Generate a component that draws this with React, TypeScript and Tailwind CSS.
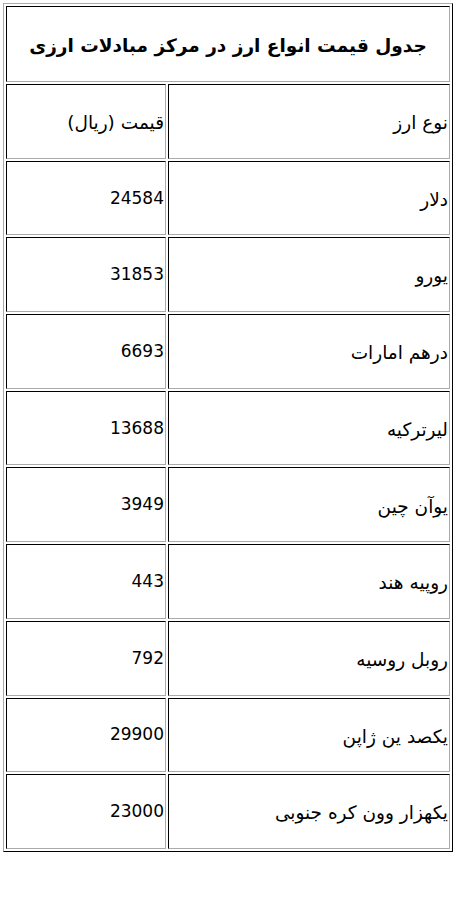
const rows = [
  { name: 'دلار', price: '24584' },
  { name: 'یورو', price: '31853' },
  { name: 'درهم امارات', price: '6693' },
  { name: 'لیرترکیه', price: '13688' },
  { name: 'یوآن چین', price: '3949' },
  { name: 'روپیه هند', price: '443' },
  { name: 'روبل روسیه', price: '792' },
  { name: 'یکصد ین ژاپن', price: '29900' },
  { name: 'یکهزار وون کره جنوبی', price: '23000' },
];

const cell =
  'flex h-[74.7px] items-center justify-end border border-t-black border-l-black border-r-[#ababab] border-b-[#ababab] pr-px leading-none text-black';

export default function App() {
  return (
    <div className="min-h-[900px] bg-white pl-[3px] pt-[3px] font-['DejaVu_Sans',Tahoma,sans-serif]">
      <div className="w-[450px] border border-t-[#ababab] border-l-[#ababab] border-r-black border-b-black p-[2px]">
        <div className="grid grid-cols-[160px_1fr] gap-[2px]">
          <div className="col-span-2 flex h-[76px] items-center justify-center border border-t-black border-l-black border-r-[#ababab] border-b-[#ababab] pt-1">
            <h1 dir="rtl" className="text-[18.5px] font-bold text-black">
              جدول قیمت انواع ارز در مرکز مبادلات ارزی
            </h1>
          </div>

          <div className={cell}>
            <span dir="rtl" className="pt-1 text-[18.5px]">قیمت (ریال)</span>
          </div>
          <div className={cell}>
            <span dir="rtl" className="pt-1 text-[18.5px]">نوع ارز</span>
          </div>

          {rows.map((r) => (
            <div key={r.name} className="contents">
              <div className={cell}>
                <span className="text-[17px]">{r.price}</span>
              </div>
              <div className={cell}>
                <span dir="rtl" className="pt-1 text-[18.5px]">{r.name}</span>
              </div>
            </div>
          ))}
        </div>
      </div>
    </div>
  );
}
